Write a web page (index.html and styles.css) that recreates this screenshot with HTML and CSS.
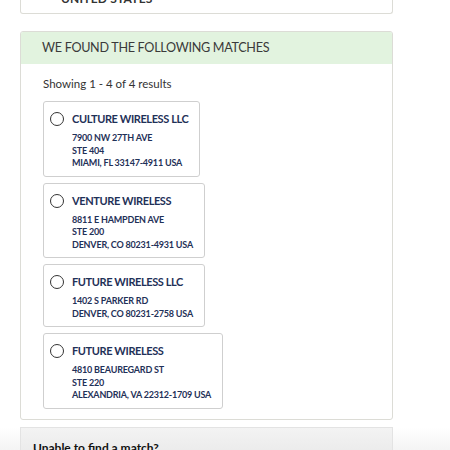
FILE: index.html
```html
<!DOCTYPE html>
<html>
<head>
<meta charset="utf-8">
<link rel="stylesheet" href="styles.css">
</head>
<body>
<div class="page">
  <div class="card top-card">
    <div class="top-text">UNITED STATES</div>
  </div>

  <div class="card matches">
    <div class="matches-head">WE FOUND THE FOLLOWING MATCHES</div>
    <div class="matches-body">
      <div class="count">Showing 1 - 4 of 4 results</div>
      <div class="options">
        <label class="option">
          <span class="radio"></span>
          <span class="info">
            <span class="name">CULTURE WIRELESS LLC</span>
            <span class="addr">7900 NW 27TH AVE</span>
            <span class="addr">STE 404</span>
            <span class="addr">MIAMI, FL 33147-4911 USA</span>
          </span>
        </label>
        <label class="option">
          <span class="radio"></span>
          <span class="info">
            <span class="name">VENTURE WIRELESS</span>
            <span class="addr">8811 E HAMPDEN AVE</span>
            <span class="addr">STE 200</span>
            <span class="addr">DENVER, CO 80231-4931 USA</span>
          </span>
        </label>
        <label class="option">
          <span class="radio"></span>
          <span class="info">
            <span class="name">FUTURE WIRELESS LLC</span>
            <span class="addr">1402 S PARKER RD</span>
            <span class="addr">DENVER, CO 80231-2758 USA</span>
          </span>
        </label>
        <label class="option">
          <span class="radio"></span>
          <span class="info">
            <span class="name">FUTURE WIRELESS</span>
            <span class="addr">4810 BEAUREGARD ST</span>
            <span class="addr">STE 220</span>
            <span class="addr">ALEXANDRIA, VA 22312-1709 USA</span>
          </span>
        </label>
      </div>
    </div>
  </div>

  <div class="footer-band">
    <div class="nomatch">
      <div class="nomatch-title">Unable to find a match?</div>
    </div>
  </div>
</div>
</body>
</html>
```

FILE: styles.css
```css
html, body {
  margin: 0;
  padding: 0;
  background: #ffffff;
}
body {
  font-family: "Lato", "Open Sans", sans-serif;
  color: #333333;
  overflow: hidden;
  height: 450px;
}
.page {
  width: 450px;
}
.card {
  width: 371px;
  margin-left: 20px;
  border: 1px solid #dcdcd6;
  border-radius: 3px;
  background: #ffffff;
}
.top-card {
  margin-top: -20px;
  height: 33px;
  border-top: none;
}
.top-text {
  padding-left: 40px;
  padding-top: 11px;
  font-size: 12px;
  font-weight: 700;
  color: #333;
  letter-spacing: 0.2px;
}
.matches {
  margin-top: 17px;
  overflow: hidden;
}
.matches-head {
  background: #e2f3df;
  height: 32px;
  line-height: 31px;
  padding-left: 21px;
  font-size: 12.6px;
  color: #3a3a3a;
  letter-spacing: -0.3px;
}
.matches-body {
  padding: 11px 21px 10px 22px;
}
.count {
  font-size: 11.5px;
  color: #333;
  line-height: 18px;
}
.options {
  margin-top: 8px;
  display: flex;
  flex-direction: column;
  align-items: flex-start;
  gap: 6px;
}
.option {
  display: flex;
  align-items: flex-start;
  gap: 8px;
  border: 1.5px solid #cfcfcf;
  border-radius: 3px;
  padding: 9px 11px 6px 6px;
  background: #fff;
}
.radio {
  width: 12px;
  height: 12px;
  border: 1.5px solid #333;
  border-radius: 50%;
  margin-top: 1px;
  flex: none;
}
.info {
  display: flex;
  flex-direction: column;
  color: #1f3158;
  font-weight: 700;
}
.name {
  font-size: 11px;
  letter-spacing: -0.4px;
  line-height: 16px;
  margin-bottom: 5px;
}
.addr {
  font-size: 9px;
  letter-spacing: -0.2px;
  line-height: 12.5px;
}
.footer-band {
  margin-top: 7px;
  height: 40px;
  background: linear-gradient(to bottom, #ffffff 0%, #ececec 100%);
}
.nomatch {
  width: 371px;
  margin-left: 20px;
  height: 40px;
  border: 1px solid #e3e3e3;
  border-bottom: none;
  background: linear-gradient(to bottom, #f3f3f3 0%, #e6e6e6 100%);
}
.nomatch-title {
  padding-left: 12px;
  padding-top: 12px;
  font-size: 12px;
  font-weight: 700;
  color: #111;
}
```
